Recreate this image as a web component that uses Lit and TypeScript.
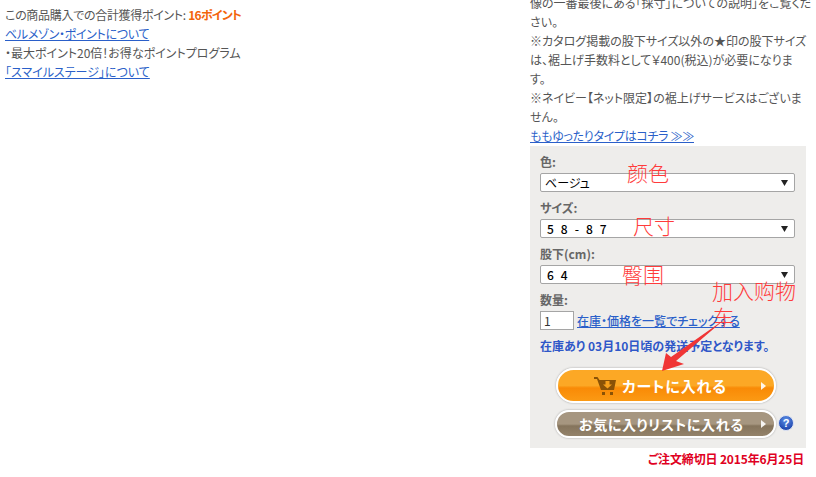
import { LitElement, html, css } from "lit";
import { customElement } from "lit/decorators.js";

@customElement("select-row")
class SelectRow extends LitElement {
  static properties = {
    label: { type: String },
    value: { type: String },
    spaced: { type: Boolean },
  };
  label = "";
  value = "";
  spaced = false;

  static styles = css`
    :host {
      display: block;
      margin-bottom: 7px;
    }
    .label {
      height: 17px;
      line-height: 17px;
      font-size: 12px;
      font-weight: 700;
      color: #666;
      font-feature-settings: "palt";
    }
    .box {
      box-sizing: border-box;
      height: 19px;
      margin-top: 3px;
      padding: 0 6px 0 4px;
      display: flex;
      align-items: center;
      justify-content: space-between;
      background: #fff;
      border: 1px solid #a5a5a5;
      border-radius: 2px;
      font-size: 12px;
      color: #000;
    }
    .spaced {
      padding-left: 2px;
      letter-spacing: 7px;
      font-weight: 500;
    }
    svg {
      display: block;
    }
  `;

  render() {
    return html`
      <div class="label">${this.label}</div>
      <div class="box">
        <span class=${this.spaced ? "spaced" : ""}>${this.value}</span>
        <svg width="7" height="6" viewBox="0 0 7 6"><path d="M0 0h7L3.5 6z" fill="#222" /></svg>
      </div>
    `;
  }
}

@customElement("app-root")
class AppRoot extends LitElement {
  static styles = css`
    :host {
      display: block;
      position: relative;
      width: 816px;
      height: 477px;
      overflow: hidden;
      background: #fff;
      font-family: "Noto Sans CJK JP", "Liberation Sans", sans-serif;
      font-size: 12px;
      color: #555;
    }
    .page {
      display: flex;
      justify-content: space-between;
      padding-left: 5px;
    }
    .left {
      width: 260px;
      padding-top: 5px;
      line-height: 19px;
      font-feature-settings: "palt";
      white-space: nowrap;
    }
    .tight {
      letter-spacing: -0.3px;
    }
    a {
      color: #2a5fc9;
      text-decoration: underline;
    }
    .pts {
      color: #f3640c;
      font-weight: 700;
      letter-spacing: -0.8px;
    }
    .right {
      width: 276px;
      margin: -7px 10px 0 0;
      line-height: 19px;
      font-feature-settings: "palt";
      white-space: nowrap;
    }
    .panel {
      box-sizing: border-box;
      height: 302px;
      margin-top: 1px;
      padding: 7px 11px 0 10px;
      background: #eeedeb;
    }
    .qty-label {
      height: 17px;
      line-height: 17px;
      font-weight: 700;
      color: #666;
    }
    .qty {
      display: flex;
      align-items: center;
      gap: 3px;
      margin-top: 3px;
      height: 19px;
    }
    .qty-input {
      box-sizing: border-box;
      width: 34px;
      height: 19px;
      padding-left: 3px;
      line-height: 17px;
      background: #fff;
      border: 1px solid #a5a5a5;
      color: #333;
    }
    .qty a {
      font-weight: 500;
    }
    .stock {
      margin-top: 7px;
      color: #2f57c8;
      font-weight: 700;
      line-height: 17px;
    }
    .btns {
      display: flex;
      flex-direction: column;
      gap: 7px;
      margin: 14px 0 0 16px;
    }
    .btn {
      box-sizing: border-box;
      display: flex;
      align-items: center;
      position: relative;
      color: #fff;
      font-weight: 700;
      border: 2px solid #fff;
      border-radius: 18px;
      box-shadow: 0 0 2px #999;
    }
    .cart {
      width: 220px;
      height: 35px;
      gap: 6px;
      padding-left: 36px;
      font-size: 15px;
      letter-spacing: 0.8px;
      background: linear-gradient(#fca825 0, #fca825 50%, #f98a06 58%, #fb9a14 100%);
    }
    .fav {
      width: 221px;
      height: 28px;
      margin-left: -1px;
      padding-left: 22px;
      font-size: 14px;
      letter-spacing: 0.6px;
      background: linear-gradient(#a69680 0, #a69680 50%, #85745c 58%, #94836b 100%);
    }
    .fav-row {
      display: flex;
      align-items: center;
      gap: 2px;
    }
    .help {
      margin-top: -2px;
    }
    .tri {
      position: absolute;
      right: 8px;
      top: 50%;
      margin-top: -4px;
      width: 0;
      height: 0;
      border-left: 5px solid #fff;
      border-top: 4px solid transparent;
      border-bottom: 4px solid transparent;
      opacity: 0.9;
    }
    .deadline {
      margin-top: 2px;
      padding-right: 2px;
      text-align: right;
      color: #e00022;
      font-weight: 700;
      line-height: 17px;
      letter-spacing: -0.15px;
    }
    .note {
      position: absolute;
      color: #ff3b3b;
      font-size: 21px;
      line-height: 24px;
      font-family: "Noto Sans CJK SC", sans-serif;
      font-weight: 300;
      white-space: nowrap;
    }
    .n1 { left: 627px; top: 160px; }
    .n2 { left: 633px; top: 213px; }
    .n3 { left: 622px; top: 262px; }
    .n4 { left: 712px; top: 278px; }
    .n5 { left: 713px; top: 304px; }
    .arrow {
      position: absolute;
      left: 650px;
      top: 300px;
    }
  `;

  render() {
    return html`
      <div class="page">
        <div class="left">
          <div class="tight">この商品購入での合計獲得ポイント: <span class="pts">16ポイント</span></div>
          <div class="tight"><a href="#">ベルメゾン・ポイントについて</a></div>
          <div>・最大ポイント20倍！お得なポイントプログラム</div>
          <div><a href="#">「スマイルステージ」について</a></div>
        </div>
        <div class="right">
          <div>像の一番最後にある「採寸」についての説明」をご覧くだ</div>
          <div>さい。</div>
          <div>※カタログ掲載の股下サイズ以外の★印の股下サイズ</div>
          <div>は、裾上げ手数料として￥400(税込)が必要になりま</div>
          <div>す。</div>
          <div>※ネイビー【ネット限定】の裾上げサービスはございま</div>
          <div>せん。</div>
          <div class="tight"><a href="#">ももゆったりタイプはコチラ ≫≫</a></div>
          <div class="panel">
            <select-row label="色:" value="ベージュ"></select-row>
            <select-row label="サイズ:" value="58-87" spaced></select-row>
            <select-row label="股下(cm):" value="64" spaced></select-row>
            <div class="qty-label">数量:</div>
            <div class="qty">
              <div class="qty-input">1</div>
              <a href="#">在庫・価格を一覧でチェックする</a>
            </div>
            <div class="stock">在庫あり 03月10日頃の発送予定となります。</div>
            <div class="btns">
              <div class="btn cart">
                <svg width="22" height="18" viewBox="0 0 22 18">
                  <path d="M0 0h3.500l2 3H22l-2 10H7L3 2H0z" fill="#8a5206" />
                  <path d="M11.500 4h4v3.500h2.500l-4.500 4-4.500-4h2.500z" fill="#f7a01c" />
                  <rect x="8" y="15" width="3" height="3" fill="#8a5206" />
                  <rect x="16" y="15" width="3" height="3" fill="#8a5206" />
                </svg>
                <span>カートに入れる</span>
                <i class="tri"></i>
              </div>
              <div class="fav-row">
                <div class="btn fav">お気に入りリストに入れる<i class="tri"></i></div>
                <svg class="help" width="16" height="16" viewBox="0 0 16 16">
                  <defs>
                    <radialGradient id="q" cx="50%" cy="30%" r="70%">
                      <stop offset="0" stop-color="#5c8fe6" />
                      <stop offset="1" stop-color="#1a3fa8" />
                    </radialGradient>
                  </defs>
                  <circle cx="8" cy="8" r="7.500" fill="url(#q)" stroke="#dfe5f2" />
                  <text x="8" y="12" text-anchor="middle" font-size="11" font-weight="700" fill="#fff" font-family="Liberation Sans">?</text>
                </svg>
              </div>
            </div>
          </div>
          <div class="deadline">ご注文締切日 2015年6月25日</div>
        </div>
      </div>
      <span class="note n1">颜色</span>
      <span class="note n2">尺寸</span>
      <span class="note n3">臀围</span>
      <span class="note n4">加入购物</span>
      <span class="note n5">车</span>
      <svg class="arrow" width="90" height="80" viewBox="0 0 90 80">
        <path d="M75 19 L26 61 L34 64 L12 71 L16 53 L21 57 Z" fill="#f03535" />
      </svg>
    `;
  }
}
